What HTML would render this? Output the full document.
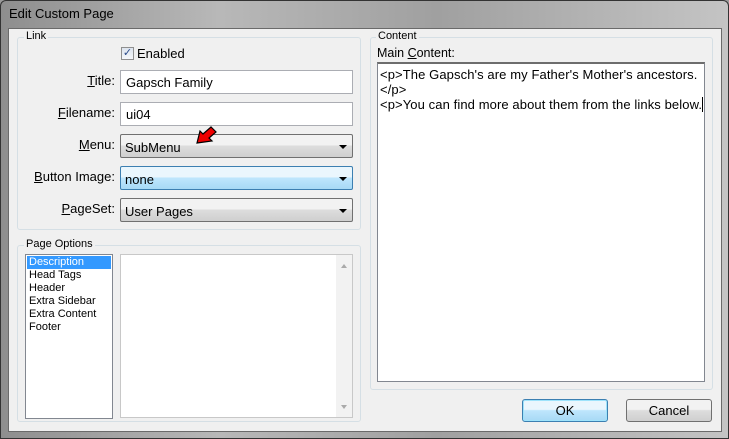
<!DOCTYPE html>
<html><head><style>
*{margin:0;padding:0;box-sizing:border-box}
body{width:729px;height:439px;overflow:hidden;background:#9a9a9a;font-family:"Liberation Sans",sans-serif;font-size:12px;color:#000;position:relative}
.a{position:absolute}
.frame{left:0;top:0;width:729px;height:439px;background:linear-gradient(90deg,#8e8e8e,#b8b8b8 30%,#a0a0a0 60%,#c4c4c4);border:1px solid #333;border-radius:6px 6px 0 0}
.client{left:8px;top:28px;width:714px;height:404px;background:#f0f0f0;border:1px solid #6a6a6a}
.grp{border:1px solid #d5dfe5;border-radius:3px}
.leg{background:#f0f0f0;padding:0 2px;font-size:11px}
.inp{background:#fff;border:1px solid #abadb3;height:24px;padding:4px 5px;font-size:13px}
.cb{height:24px;border:1px solid #707070;border-radius:2px;background:linear-gradient(#f2f2f2 45%,#dddddd 50%,#cfcfcf);padding:5px 4px;font-size:13px}
.cb.hl{border-color:#3c7fb1;background:linear-gradient(#eaf6fd 45%,#bee6fd 50%,#a7d9f5)}
.cb:after{content:"";position:absolute;right:5px;top:10px;border:4px solid transparent;border-top:4px solid #000;border-bottom:0}
.lbl{font-size:13px;text-align:right;width:110px;left:5px}
u{text-decoration:underline}
.btn{border:1px solid #707070;border-radius:3px;background:linear-gradient(#f2f2f2 45%,#dddddd 50%,#cfcfcf);text-align:center;font-size:13px;padding-top:3px}
</style></head><body>
<div class="a frame"></div>
<div class="a" style="left:9px;top:6px;font-size:13px">Edit Custom Page</div>
<div class="a client"></div>

<div class="a grp" style="left:17px;top:37px;width:344px;height:193px"></div>
<div class="a leg" style="left:24px;top:30px">Link</div>
<div class="a" style="left:121px;top:47px;width:13px;height:13px;border:1px solid #8f8f8f;background:linear-gradient(#dde4ee,#f5f7fa);font-size:11px;line-height:11px;text-align:center;color:#2a4a8a">✓</div>
<div class="a" style="left:137px;top:46px;font-size:13px">Enabled</div>

<div class="a lbl" style="top:73px"><u>T</u>itle:</div>
<div class="a inp" style="left:120px;top:70px;width:233px">Gapsch Family</div>
<div class="a lbl" style="top:105px"><u>F</u>ilename:</div>
<div class="a inp" style="left:120px;top:102px;width:233px">ui04</div>
<div class="a lbl" style="top:137px"><u>M</u>enu:</div>
<div class="a cb" style="left:120px;top:134px;width:233px">SubMenu</div>
<div class="a lbl" style="top:169px"><u>B</u>utton Image:</div>
<div class="a cb hl" style="left:120px;top:166px;width:233px">none</div>
<div class="a lbl" style="top:201px"><u>P</u>ageSet:</div>
<div class="a cb" style="left:120px;top:198px;width:233px">User Pages</div>
<svg class="a" style="left:192px;top:124px" width="30" height="24"><path d="M5 19 L8 7 L11 10 L19 3 L24 8 L17 14 L20 17 Z" fill="#e00" stroke="#000" stroke-width="1.2"/></svg>

<div class="a grp" style="left:17px;top:245px;width:344px;height:177px"></div>
<div class="a leg" style="left:24px;top:238px">Page Options</div>
<div class="a" style="left:25px;top:254px;width:88px;height:165px;background:#fff;border:1px solid #828790;font-size:11px;line-height:13px;padding:1px;white-space:nowrap">
<div style="background:#3399ff;color:#fff;padding-left:2px">Description</div>
<div style="padding-left:2px">Head Tags<br>Header<br>Extra Sidebar<br>Extra Content<br>Footer</div></div>
<div class="a" style="left:120px;top:254px;width:233px;height:164px;background:#fff;border:1px solid #c8c8c8"></div>
<div class="a" style="left:336px;top:255px;width:16px;height:162px;background:#f2f2f2"></div>
<div class="a" style="left:341px;top:264px;border:3px solid transparent;border-bottom:4px solid #aaa;border-top:0"></div>
<div class="a" style="left:341px;top:405px;border:3px solid transparent;border-top:4px solid #aaa;border-bottom:0"></div>

<div class="a grp" style="left:370px;top:37px;width:343px;height:353px"></div>
<div class="a leg" style="left:376px;top:30px">Content</div>
<div class="a" style="left:377px;top:46px;font-size:12.5px">Main <u>C</u>ontent:</div>
<div class="a" style="left:377px;top:62px;width:328px;height:320px;background:#fff;border:1px solid #828790;border-top:2px solid #6d6d6d;font-size:13px;line-height:15px;padding:3px 2px;letter-spacing:0.1px;white-space:nowrap">&lt;p&gt;The Gapsch's are my Father's Mother's ancestors.<br>&lt;/p&gt;<br>&lt;p&gt;You can find more about them from the links below.<span style="border-left:1px solid #000"></span></div>

<div class="a btn" style="left:522px;top:399px;width:86px;height:23px;border-color:#3c7fb1;background:linear-gradient(#eaf6fd 45%,#bee6fd 50%,#a7d9f5);box-shadow:inset 0 0 0 1px #9ee3fb">OK</div>
<div class="a btn" style="left:626px;top:399px;width:86px;height:23px">Cancel</div>
</body></html>
